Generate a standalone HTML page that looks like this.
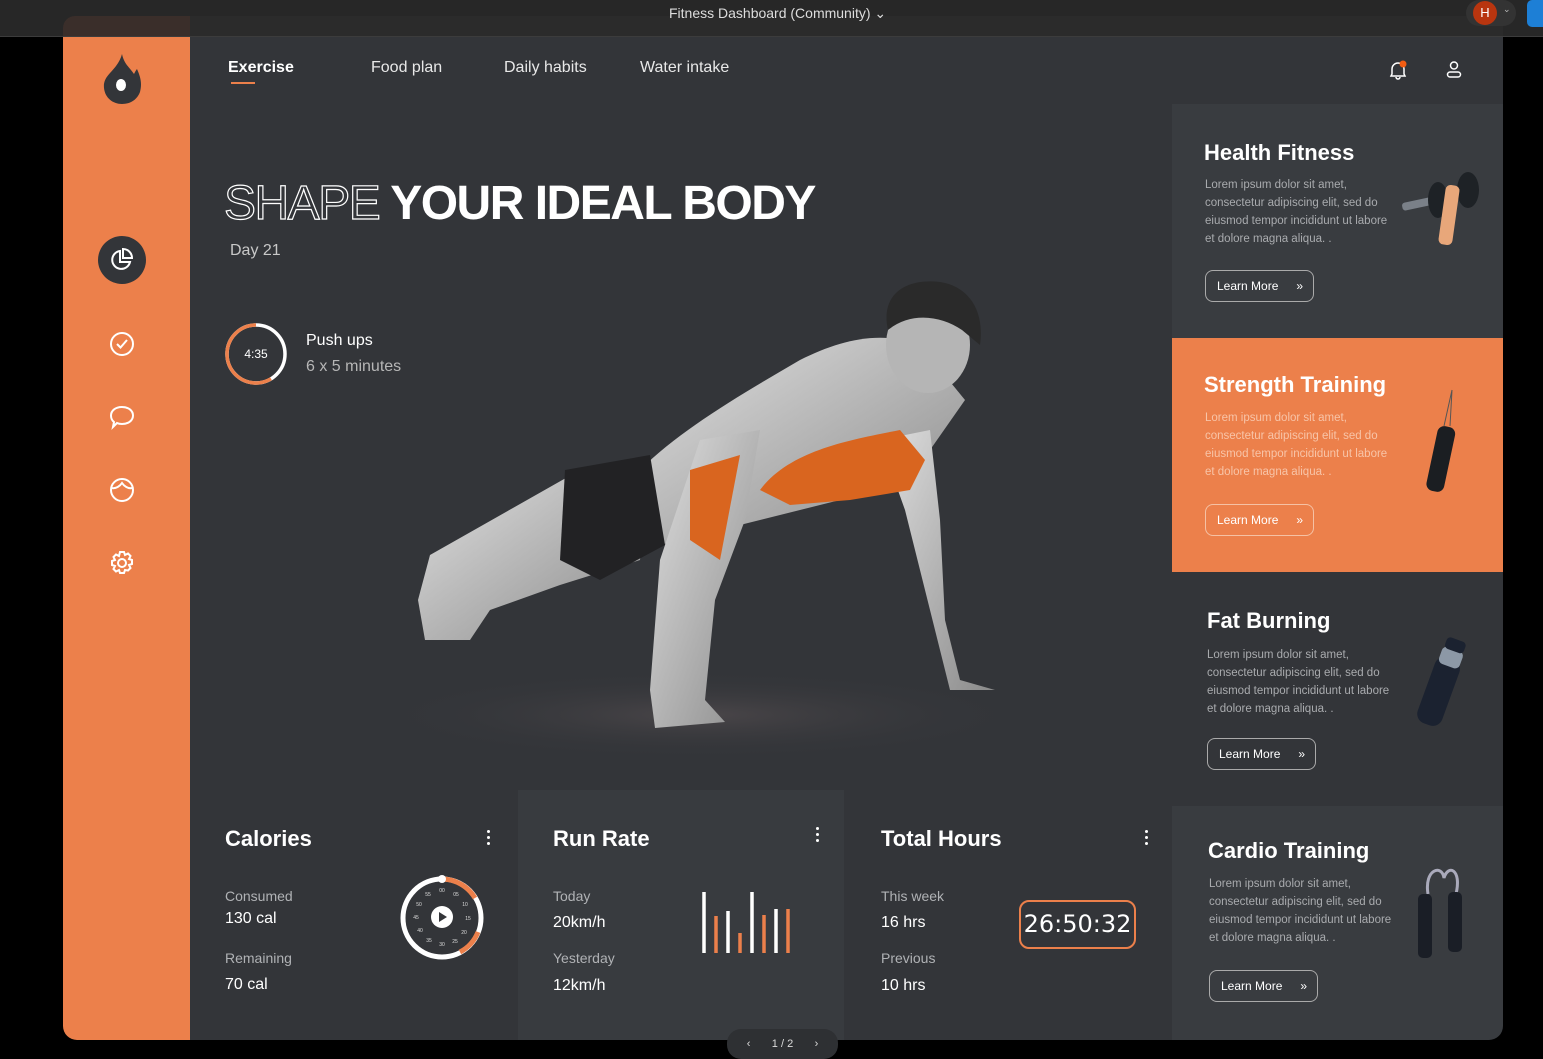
<!DOCTYPE html>
<html><head><meta charset="utf-8">
<style>
*{margin:0;padding:0;box-sizing:border-box}
body{width:1543px;height:1053px;background:#000;font-family:"Liberation Sans",sans-serif;position:relative;overflow:hidden;color:#fff}
.abs{position:absolute}
.top{left:0;top:0;width:1543px;height:37px;background:#272727;border-bottom:1px solid #3a3a3a}
.tabbg{left:63px;top:16px;width:127px;height:21px;background:#3a2e2a;border-radius:12px 0 0 0}
.tabbg2{left:190px;top:16px;width:1313px;height:21px;background:#2b2b2b}
.side{left:63px;top:37px;width:127px;height:1003px;background:#ec804b;border-radius:0 0 0 14px}
.main{left:190px;top:37px;width:1313px;height:753px;background:#333539}
.nav{top:59px;font-size:16px;color:#e8e8e8}
.rc{left:1172px;width:331px;height:234px}
.rc h3{position:absolute;left:32px;font-size:22px;font-weight:bold;color:#fff}
.rc p{position:absolute;left:33px;width:190px;font-size:11.5px;line-height:18px;color:#a9abae}
.btn{position:absolute;left:33px;width:109px;height:32px;border:1px solid #aaa;border-radius:8px;font-size:12px;line-height:30px;padding-left:11px;color:#fff}
.btn b{position:absolute;right:10px;top:0;font-weight:normal;font-size:12px}
.bc{top:790px;height:250px}
.bc h3{position:absolute;left:35px;top:36px;font-size:22px;font-weight:bold}
.lbl{position:absolute;left:35px;font-size:14px;color:#b0b2b5}
.val{position:absolute;left:35px;font-size:16px;color:#fff}
.dots{position:absolute;width:3px;height:3px;background:#fff;border-radius:50%;box-shadow:0 6px 0 #fff,0 12px 0 #fff}
</style></head><body>
<div class="abs top"></div>
<div class="abs tabbg"></div><div class="abs tabbg2"></div>
<div class="abs" style="left:0;top:0;width:1543px;height:37px;border-bottom:1px solid #3c3c3c"></div>
<div class="abs" style="left:669px;top:5px;font-size:14px;color:#ddd">Fitness Dashboard (Community) &#8964;</div>
<div class="abs" style="left:1466px;top:0;width:50px;height:26px;background:#333;border-radius:13px"></div>
<div class="abs" style="left:1473px;top:1px;width:24px;height:24px;border-radius:50%;background:#b8350f;font-size:13px;text-align:center;line-height:24px">H</div>
<div class="abs" style="left:1503px;top:4px;font-size:9px;color:#bbb">&#8964;</div>
<div class="abs" style="left:1527px;top:0;width:16px;height:27px;background:#1d7fd6;border-radius:5px 0 0 5px"></div>

<div class="abs side"></div>
<svg class="abs" style="left:100px;top:52px" width="44" height="54" viewBox="0 0 44 54"><path d="M22 2 C24 12 30 16 34 22 C36 18 37 17 37 17 C41 26 42 32 40 40 C37 48 30 52 22 52 C13 52 5 46 4 36 C3 26 10 22 16 14 C19 10 21 6 22 2Z" fill="#333539"/><ellipse cx="21" cy="33" rx="5" ry="6" fill="#fff"/></svg>
<div class="abs" style="left:98px;top:236px;width:48px;height:48px;border-radius:50%;background:#333539"></div>
<svg class="abs" style="left:108px;top:246px" width="28" height="28" viewBox="0 0 28 28" fill="none" stroke="#fff" stroke-width="2"><path d="M12 5 A9 9 0 1 0 22 16 H12 Z"/><path d="M15 3 A9 9 0 0 1 24 12 H15 Z"/></svg>
<svg class="abs" style="left:108px;top:330px" width="28" height="28" viewBox="0 0 28 28" fill="none" stroke="#fff" stroke-width="2"><circle cx="14" cy="14" r="11"/><path d="M9 14 l3.5 3.5 L19 10"/></svg>
<svg class="abs" style="left:108px;top:403px" width="28" height="28" viewBox="0 0 28 28" fill="none" stroke="#fff" stroke-width="2"><path d="M14 4 C21 4 25 8 25 12.5 C25 17 21 21 14 21 C12 21 10 20.5 9 20 L5 24 L6 19 C4 17.5 3 15 3 12.5 C3 8 7 4 14 4Z"/></svg>
<svg class="abs" style="left:108px;top:476px" width="28" height="28" viewBox="0 0 28 28" fill="none" stroke="#fff" stroke-width="2"><circle cx="14" cy="14" r="11"/><path d="M3.5 12 C8 13 12 10 14 7 C16 10 20 13 24.5 12"/></svg>
<svg class="abs" style="left:108px;top:549px" width="28" height="28" viewBox="0 0 28 28" fill="none" stroke="#fff" stroke-width="2"><circle cx="14" cy="14" r="4"/><path d="M12 3h4l1 3 3-1.5 2.5 2.5L21 10l3 1v4l-3 1 1.5 3-2.5 2.5L17 21l-1 3h-4l-1-3-3 1.5L5.5 20 7 17l-3-1v-4l3-1-1.5-3L8 5.5 11 7z"/></svg>

<div class="abs main"></div>
<div class="abs nav" style="left:228px;font-weight:bold;color:#fff">Exercise</div>
<div class="abs" style="left:231px;top:82px;width:24px;height:2px;background:#ec804b"></div>
<div class="abs nav" style="left:371px">Food plan</div>
<div class="abs nav" style="left:504px">Daily habits</div>
<div class="abs nav" style="left:640px">Water intake</div>
<svg class="abs" style="left:1386px;top:58px" width="24" height="24" viewBox="0 0 24 24" fill="none" stroke="#fff" stroke-width="1.5"><path d="M6 16 V11 A6 6 0 0 1 18 11 V16 L19 18 H5Z M10 19 a2 2 0 0 0 4 0"/><circle cx="17" cy="6" r="3.5" fill="#f35d12" stroke="none"/></svg>
<svg class="abs" style="left:1442px;top:58px" width="24" height="24" viewBox="0 0 24 24" fill="none" stroke="#fff" stroke-width="1.5"><circle cx="12" cy="7.5" r="3.5"/><rect x="5.5" y="14" width="13" height="5" rx="2.5"/></svg>

<div class="abs" style="left:224px;top:176px;font-size:48px;font-weight:bold;letter-spacing:-1.5px;white-space:nowrap"><span style="color:transparent;-webkit-text-stroke:1.2px #fff;font-weight:normal">SHAPE</span> YOUR IDEAL BODY</div>
<div class="abs" style="left:230px;top:242px;font-size:16px;color:#c8c8c8">Day 21</div>
<svg class="abs" style="left:224px;top:322px" width="64" height="64" viewBox="0 0 64 64"><circle cx="32" cy="32" r="29" fill="none" stroke="#fff" stroke-width="3.5"/><path d="M32 3 A29 29 0 1 0 47 56.8" fill="none" stroke="#ec804b" stroke-width="3.5"/><text x="32" y="36" font-size="12" fill="#fff" text-anchor="middle" font-family="Liberation Sans">4:35</text></svg>
<div class="abs" style="left:306px;top:332px;font-size:16px">Push ups</div>
<div class="abs" style="left:306px;top:358px;font-size:16px;color:#b6b6b6">6 x 5 minutes</div>

<svg class="abs" style="left:0;top:0" width="1172" height="790">
<defs><radialGradient id="sh" cx="50%" cy="50%" r="50%"><stop offset="0" stop-color="#4a4649"/><stop offset="1" stop-color="#333539" stop-opacity="0"/></radialGradient>
<linearGradient id="sk" x1="0" y1="0" x2="1" y2="1"><stop offset="0" stop-color="#e0e0e0"/><stop offset="1" stop-color="#8a8a8a"/></linearGradient></defs>
<ellipse cx="700" cy="715" rx="330" ry="45" fill="url(#sh)"/>
<!-- legs -->
<path d="M580 470 L430 555 L418 600 L425 640 L470 640 L490 610 L560 585 L640 560 L650 470Z" fill="url(#sk)"/>
<!-- torso -->
<path d="M640 470 C680 430 740 395 800 360 C840 340 880 330 920 345 L965 400 L930 450 L880 490 L800 510 L720 530 L660 545Z" fill="url(#sk)"/>
<!-- left arm -->
<path d="M700 440 L760 430 L745 520 L715 600 L705 700 L725 722 L655 728 L650 690 L660 560Z" fill="url(#sk)"/>
<!-- right arm -->
<path d="M880 440 L930 430 L940 520 L945 620 L960 680 L995 690 L950 690 L930 610 L905 510Z" fill="url(#sk)"/>
<path d="M565 470 L650 455 L665 545 L600 580 L560 560Z" fill="#222224"/>
<ellipse cx="928" cy="345" rx="42" ry="48" fill="#b5b5b5"/>
<path d="M888 330 C880 295 905 278 940 282 C968 286 985 310 980 345 L962 330 C940 315 910 312 888 330Z" fill="#2a2a2a"/>
<path d="M690 470 L740 455 L720 560 L690 540Z" fill="#d9651f"/>
<path d="M760 490 C790 450 850 440 900 430 L925 460 L910 490 L850 500 L790 505Z" fill="#d9651f"/>
</svg>

<div class="abs rc" style="top:104px;background:#393c40">
<h3 style="top:36px">Health Fitness</h3>
<p style="top:72px">Lorem ipsum dolor sit amet, consectetur adipiscing elit, sed do eiusmod tempor incididunt ut labore et dolore magna aliqua. .</p>
<div class="btn" style="top:166px">Learn More<b>&#187;</b></div>
<svg class="abs" style="left:228px;top:66px" width="84" height="80"><rect x="2" y="30" width="30" height="8" rx="3" fill="#7a8088" transform="rotate(-12 17 34)"/><ellipse cx="38" cy="30" rx="10" ry="18" fill="#1e2226"/><ellipse cx="68" cy="20" rx="11" ry="18" fill="#1e2226"/><rect x="42" y="15" width="14" height="60" rx="5" fill="#e8a77a" transform="rotate(8 49 45)"/></svg>
</div>
<div class="abs rc" style="top:338px;background:#ec804b">
<h3 style="top:34px">Strength Training</h3>
<p style="top:71px;color:#f8c4a8">Lorem ipsum dolor sit amet, consectetur adipiscing elit, sed do eiusmod tempor incididunt ut labore et dolore magna aliqua. .</p>
<div class="btn" style="top:166px;border-color:#f5c1a4">Learn More<b>&#187;</b></div>
<svg class="abs" style="left:242px;top:50px" width="50" height="110"><path d="M38 2 L30 38 M38 2 L36 38" stroke="#555" /><rect x="18" y="38" width="18" height="66" rx="7" fill="#1b1e22" transform="rotate(12 27 70)"/></svg>
</div>
<div class="abs rc" style="top:572px;background:#333539">
<h3 style="top:36px;left:35px">Fat Burning</h3>
<p style="top:74px;left:35px">Lorem ipsum dolor sit amet, consectetur adipiscing elit, sed do eiusmod tempor incididunt ut labore et dolore magna aliqua. .</p>
<div class="btn" style="top:166px;left:35px">Learn More<b>&#187;</b></div>
<svg class="abs" style="left:235px;top:55px" width="70" height="110"><g transform="rotate(20 35 55)"><rect x="22" y="30" width="26" height="70" rx="10" fill="#1b2230"/><rect x="24" y="20" width="22" height="18" rx="5" fill="#8c98a6"/><rect x="25" y="10" width="20" height="12" rx="4" fill="#1b2230"/></g></svg>
</div>
<div class="abs rc" style="top:806px;height:234px;background:#393c40;border-radius:0 0 14px 0">
<h3 style="top:32px;left:36px">Cardio Training</h3>
<p style="top:69px;left:37px">Lorem ipsum dolor sit amet, consectetur adipiscing elit, sed do eiusmod tempor incididunt ut labore et dolore magna aliqua. .</p>
<div class="btn" style="top:164px;left:37px">Learn More<b>&#187;</b></div>
<svg class="abs" style="left:240px;top:58px" width="60" height="100"><path d="M16 30 C12 5 30 0 32 14 C36 0 50 5 44 30" stroke="#aab" stroke-width="3" fill="none"/><rect x="6" y="30" width="14" height="64" rx="5" fill="#1a1e26"/><rect x="36" y="28" width="14" height="60" rx="5" fill="#1a1e26"/></svg>
</div>

<div class="abs bc" style="left:190px;width:328px;background:#333539">
<h3>Calories</h3><div class="dots" style="left:297px;top:40px"></div>
<div class="lbl" style="top:98px">Consumed</div><div class="val" style="top:120px">130 cal</div>
<div class="lbl" style="top:160px">Remaining</div><div class="val" style="top:186px">70 cal</div>
<svg class="abs" style="left:208px;top:84px" width="88" height="88" viewBox="0 0 88 88"><circle cx="44" cy="44" r="39" fill="none" stroke="#fff" stroke-width="5"/><path d="M44 5 A39 39 0 0 1 77 24" fill="none" stroke="#ec804b" stroke-width="5"/><path d="M80 58 A39 39 0 0 1 62 78" fill="none" stroke="#ec804b" stroke-width="5"/><circle cx="44" cy="5" r="4" fill="#fff"/><circle cx="44" cy="43" r="11" fill="#fff"/><path d="M41 38 L49 43 L41 48Z" fill="#333539"/><g font-size="5" fill="#ddd" text-anchor="middle" font-family="Liberation Sans"><text x="44" y="18">00</text><text x="58" y="22">05</text><text x="67" y="32">10</text><text x="70" y="46">15</text><text x="66" y="60">20</text><text x="57" y="69">25</text><text x="44" y="72">30</text><text x="31" y="68">35</text><text x="22" y="58">40</text><text x="18" y="45">45</text><text x="21" y="32">50</text><text x="30" y="22">55</text></g></svg>
</div>
<div class="abs bc" style="left:518px;width:326px;background:#383b3f">
<h3>Run Rate</h3><div class="dots" style="left:298px;top:37px"></div>
<div class="lbl" style="top:98px">Today</div><div class="val" style="top:124px">20km/h</div>
<div class="lbl" style="top:160px">Yesterday</div><div class="val" style="top:187px">12km/h</div>
<svg class="abs" style="left:182px;top:100px" width="115" height="64"><g stroke-width="3.5"><line x1="4" y1="2" x2="4" y2="63" stroke="#fff"/><line x1="16" y1="26" x2="16" y2="63" stroke="#ec804b"/><line x1="28" y1="21" x2="28" y2="63" stroke="#fff"/><line x1="40" y1="43" x2="40" y2="63" stroke="#ec804b"/><line x1="52" y1="2" x2="52" y2="63" stroke="#fff"/><line x1="64" y1="25" x2="64" y2="63" stroke="#ec804b"/><line x1="76" y1="19" x2="76" y2="63" stroke="#fff"/><line x1="88" y1="19" x2="88" y2="63" stroke="#ec804b"/></g></svg>
</div>
<div class="abs bc" style="left:844px;width:328px;background:#333539">
<h3 style="left:37px">Total Hours</h3><div class="dots" style="left:301px;top:40px"></div>
<div class="lbl" style="top:98px;left:37px">This week</div><div class="val" style="top:124px;left:37px">16 hrs</div>
<div class="lbl" style="top:160px;left:37px">Previous</div><div class="val" style="top:187px;left:37px">10 hrs</div>
<div class="abs" style="left:175px;top:110px;width:117px;height:49px;border:2px solid #ec804b;border-radius:10px;font-size:24px;text-align:center;line-height:45px;font-family:'DejaVu Sans',sans-serif">26:50:32</div>
</div>
<div class="abs" style="left:727px;top:1029px;width:111px;height:30px;background:#2e3033;border-radius:14px;font-size:11px;color:#ddd;line-height:30px;text-align:center">&#8249;&nbsp;&nbsp;&nbsp;&nbsp;&nbsp;&nbsp;&nbsp;1 / 2&nbsp;&nbsp;&nbsp;&nbsp;&nbsp;&nbsp;&nbsp;&#8250;</div>
</body></html>
